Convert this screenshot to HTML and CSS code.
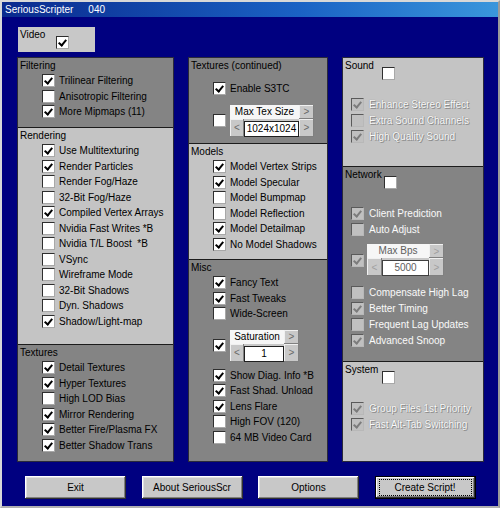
FILE: index.html
```html
<!DOCTYPE html>
<html>
<head>
    <title>SeriousScripter</title>
    <link rel="stylesheet" href="styles.css">
</head>
<body>
<div class="window">
    <!-- Barra de título -->
    <div class="titlebar"><span>SeriousScripter</span><span class="version">040</span></div>

    <div class="client">
        <!-- Interruptor general de vídeo -->
        <div class="video-box">
            <span class="video-label">Video</span>
            <span class="cb on"></span>
        </div>

        <div class="columns">
            <!-- Columna izquierda -->
            <div class="column col-left">
                <div class="group dark filtering">
                    <div class="group-title">Filtering</div>
                    <div class="list">
                        <div class="row"><span class="cb on"></span>Trilinear Filtering</div>
                        <div class="row"><span class="cb"></span>Anisotropic Filtering</div>
                        <div class="row"><span class="cb on"></span>More Mipmaps (11)</div>
                    </div>
                </div>
                <div class="group light rendering">
                    <div class="group-title">Rendering</div>
                    <div class="list">
                        <div class="row"><span class="cb on"></span>Use Multitexturing</div>
                        <div class="row"><span class="cb on"></span>Render Particles</div>
                        <div class="row"><span class="cb"></span>Render Fog/Haze</div>
                        <div class="row"><span class="cb"></span>32-Bit Fog/Haze</div>
                        <div class="row"><span class="cb on"></span>Compiled Vertex Arrays</div>
                        <div class="row"><span class="cb"></span>Nvidia Fast Writes *B</div>
                        <div class="row"><span class="cb"></span>Nvidia T/L Boost&nbsp; *B</div>
                        <div class="row"><span class="cb"></span>VSync</div>
                        <div class="row"><span class="cb"></span>Wireframe Mode</div>
                        <div class="row"><span class="cb"></span>32-Bit Shadows</div>
                        <div class="row"><span class="cb"></span>Dyn. Shadows</div>
                        <div class="row"><span class="cb on"></span>Shadow/Light-map</div>
                    </div>
                </div>
                <div class="group dark fill">
                    <div class="group-title">Textures</div>
                    <div class="list">
                        <div class="row"><span class="cb on"></span>Detail Textures</div>
                        <div class="row"><span class="cb on"></span>Hyper Textures</div>
                        <div class="row"><span class="cb"></span>High LOD Bias</div>
                        <div class="row"><span class="cb on"></span>Mirror Rendering</div>
                        <div class="row"><span class="cb on"></span>Better Fire/Plasma FX</div>
                        <div class="row"><span class="cb on"></span>Better Shadow Trans</div>
                    </div>
                </div>
            </div>

            <!-- Columna central -->
            <div class="column col-mid">
                <div class="group dark textures-cont">
                    <div class="group-title">Textures (continued)</div>
                    <div class="list spaced">
                        <div class="row"><span class="cb on"></span>Enable S3TC</div>
                        <div class="spin-row">
                            <span class="cb"></span>
                            <div class="spinner tex">
                                <div class="spin-label">Max Tex Size</div>
                                <div class="spin-btn">&gt;</div>
                                <div class="spin-btn">&lt;</div>
                                <div class="spin-value">1024x1024</div>
                                <div class="spin-btn">&gt;</div>
                            </div>
                        </div>
                    </div>
                </div>
                <div class="group light models">
                    <div class="group-title">Models</div>
                    <div class="list">
                        <div class="row"><span class="cb on"></span>Model Vertex Strips</div>
                        <div class="row"><span class="cb on"></span>Model Specular</div>
                        <div class="row"><span class="cb"></span>Model Bumpmap</div>
                        <div class="row"><span class="cb"></span>Model Reflection</div>
                        <div class="row"><span class="cb on"></span>Model Detailmap</div>
                        <div class="row"><span class="cb on"></span>No Model Shadows</div>
                    </div>
                </div>
                <div class="group dark fill">
                    <div class="group-title">Misc</div>
                    <div class="list">
                        <div class="row"><span class="cb on"></span>Fancy Text</div>
                        <div class="row"><span class="cb on"></span>Fast Tweaks</div>
                        <div class="row"><span class="cb"></span>Wide-Screen</div>
                        <div class="spin-row misc-spin">
                            <span class="cb on"></span>
                            <div class="spinner sat">
                                <div class="spin-label">Saturation</div>
                                <div class="spin-btn">&gt;</div>
                                <div class="spin-btn">&lt;</div>
                                <div class="spin-value">1</div>
                                <div class="spin-btn">&gt;</div>
                            </div>
                        </div>
                        <div class="row"><span class="cb on"></span>Show Diag. Info *B</div>
                        <div class="row"><span class="cb on"></span>Fast Shad. Unload</div>
                        <div class="row"><span class="cb on"></span>Lens Flare</div>
                        <div class="row"><span class="cb"></span>High FOV (120)</div>
                        <div class="row"><span class="cb"></span>64 MB Video Card</div>
                    </div>
                </div>
            </div>

            <!-- Columna derecha (opciones desactivadas) -->
            <div class="column col-right">
                <div class="group light sound">
                    <div class="group-head"><span class="head-title">Sound</span><span class="cb"></span></div>
                    <div class="list off">
                        <div class="row"><span class="cb dis on"></span>Enhance Stereo Effect</div>
                        <div class="row"><span class="cb dis"></span>Extra Sound Channels</div>
                        <div class="row"><span class="cb dis on"></span>High Quality Sound</div>
                    </div>
                </div>
                <div class="group dark network">
                    <div class="group-head"><span class="head-title">Network</span><span class="cb"></span></div>
                    <div class="list off">
                        <div class="row"><span class="cb dis on"></span>Client Prediction</div>
                        <div class="row"><span class="cb dis"></span>Auto Adjust</div>
                        <div class="spin-row net-spin">
                            <span class="cb dis on"></span>
                            <div class="spinner bps">
                                <div class="spin-label">Max Bps</div>
                                <div class="spin-btn">&gt;</div>
                                <div class="spin-btn">&lt;</div>
                                <div class="spin-value">5000</div>
                                <div class="spin-btn">&gt;</div>
                            </div>
                        </div>
                        <div class="row"><span class="cb dis"></span>Compensate High Lag</div>
                        <div class="row"><span class="cb dis on"></span>Better Timing</div>
                        <div class="row"><span class="cb dis"></span>Frequent Lag Updates</div>
                        <div class="row"><span class="cb dis on"></span>Advanced Snoop</div>
                    </div>
                </div>
                <div class="group light fill">
                    <div class="group-head"><span class="head-title">System</span><span class="cb"></span></div>
                    <div class="list off">
                        <div class="row"><span class="cb dis on"></span>Group Files 1st Priority</div>
                        <div class="row"><span class="cb dis on"></span>Fast Alt-Tab Switching</div>
                    </div>
                </div>
            </div>
        </div>

        <!-- Botones inferiores -->
        <div class="buttons">
            <button class="btn">Exit</button>
            <button class="btn">About SeriousScr</button>
            <button class="btn">Options</button>
            <button class="btn default"><span class="focus">Create Script!</span></button>
        </div>
    </div>
</div>
</body>
</html>
```

FILE: styles.css
```css
body {
    margin: 0;
    background-color: #000080;
    font-family: "Liberation Sans", Arial, sans-serif;
    font-size: 10px;
    color: #000;
}

.window {
    width: 500px;
    height: 508px;
    box-sizing: border-box;
    border: 2px solid;
    border-color: #d8d8d8 #9a9a9a #b0b0b0 #d8d8d8;
    background-color: #000080;
}

.titlebar {
    height: 15px;
    display: flex;
    align-items: center;
    padding-left: 3px;
    color: #fff;
    background: linear-gradient(to right, #0a2a8e, #1a62c4 60%, #3a96dc);
}

.version {
    margin-left: 15px;
}

.client {
    padding: 10px 0 0 16px;
}

/* Caja "Video" */
.video-box {
    width: 77px;
    height: 25px;
    box-sizing: border-box;
    display: flex;
    align-items: flex-start;
    padding: 1px 2px;
    background-color: #c8c8c8;
}

.video-label {
    line-height: 14px;
}

.video-box .cb {
    margin: 8px 0 0 11px;
}

.columns {
    display: flex;
    gap: 16px;
    margin-top: 6px;
    height: 403px;
}

.column {
    display: flex;
    flex-direction: column;
    outline: 1px solid #2a2a3a;
}

.col-left { width: 155px; }
.col-mid { width: 138px; }
.col-right { width: 140px; }

.group {
    box-sizing: border-box;
    padding-top: 1px;
}

.group + .group {
    border-top: 1px solid #1c1c1c;
}

.dark { background-color: #848484; }
.light { background-color: #c4c4c4; }

/* Alturas de cada grupo */
.filtering { height: 69px; }
.rendering { height: 217px; }
.textures-cont { height: 85px; }
.models { height: 116px; }
.sound { height: 108px; }
.network { height: 195px; }
.fill { flex: 1; }

.group-title {
    padding-left: 2px;
    line-height: 14px;
}

.list {
    padding-left: 24px;
}

.list.spaced {
    margin-top: 8px;
}

.list.spaced .spin-row {
    margin-top: 8px;
}

.row {
    display: flex;
    align-items: center;
    gap: 4px;
    height: 15.5px;
    white-space: nowrap;
}

/* Casillas de verificación estilo clásico */
.cb {
    position: relative;
    flex: none;
    width: 13px;
    height: 13px;
    box-sizing: border-box;
    background-color: #fff;
    border: 1px solid;
    border-color: #2e2e2e #a8a8a8 #a8a8a8 #2e2e2e;
}

.cb.on::after {
    content: "";
    position: absolute;
    left: 3px;
    top: 1px;
    width: 3px;
    height: 6px;
    border: solid #000;
    border-width: 0 2px 2px 0;
    transform: rotate(40deg);
}

.cb.dis {
    background-color: #c0c0c0;
    border-color: #5a5a5a #b8b8b8 #b8b8b8 #5a5a5a;
}

.cb.dis.on::after {
    border-color: #7c7c7c;
}

/* Selector con flechas */
.spin-row {
    display: flex;
    align-items: center;
    gap: 4px;
}

.misc-spin {
    margin: 8px 0 6px;
}

.spinner {
    display: grid;
    grid-template-rows: 14px 18px;
    background-color: #c8c8c8;
}

.spinner.tex { grid-template-columns: 14px 55px 15px; }
.spinner.sat { grid-template-columns: 14px 40px 15px; }
.spinner.bps { grid-template-columns: 15px 47px 15px; }

.spin-label {
    grid-column: 1 / 3;
    background-color: #f6f6f6;
    text-align: center;
    line-height: 14px;
}

.spin-btn {
    display: flex;
    align-items: center;
    justify-content: center;
    color: #6a6a6a;
    background-color: #c8c8c8;
    box-shadow: inset -1px -1px #808080, inset 1px 1px #f0f0f0;
}

.spin-value {
    box-sizing: border-box;
    margin-top: 2px;
    background-color: #fff;
    border: 1px solid #202020;
    text-align: center;
    line-height: 14px;
}

/* Columna derecha */
.group-head {
    display: flex;
    align-items: flex-start;
    padding-left: 2px;
    height: 22px;
}

.head-title {
    min-width: 35px;
    line-height: 14px;
}

.group-head .cb {
    margin: 8px 0 0 2px;
}

.col-right .list {
    margin-top: 15px;
    padding-left: 8px;
}

.col-right .row {
    height: 16px;
    gap: 5px;
}

/* Texto desactivado: relleno claro con contorno gris */
.list.off {
    color: #fafafa;
    text-shadow: 1px 1px 0 #8c8c8c, 0 0 1px #7a7a7a;
}

.net-spin {
    margin: 7px 0 8px;
    gap: 3px;
}

.net-spin .spin-label,
.net-spin .spin-value {
    color: #606060;
    text-shadow: none;
}

.net-spin .spin-value {
    border-color: #404040;
}

.net-spin .spin-btn {
    color: #a0a0a0;
    text-shadow: none;
}

/* Botones inferiores */
.buttons {
    display: flex;
    gap: 15.5px;
    margin-top: 15px;
    padding-left: 7px;
}

.btn {
    width: 101px;
    height: 23px;
    padding: 0;
    border: none;
    background-color: #c8c8c8;
    font-family: "Liberation Sans", Arial, sans-serif;
    font-size: 10px;
    color: #000;
    box-shadow: inset -1px -1px #303030, inset 1px 1px #fff, inset -2px -2px #808080, inset 2px 2px #e0e0e0;
}

.btn.default {
    box-shadow: inset 0 0 0 1px #000, inset -2px -2px #303030, inset 2px 2px #fff, inset -3px -3px #808080;
}

.focus {
    display: block;
    margin: 0 4px;
    line-height: 15px;
    border: 1px dotted #000;
}
```
